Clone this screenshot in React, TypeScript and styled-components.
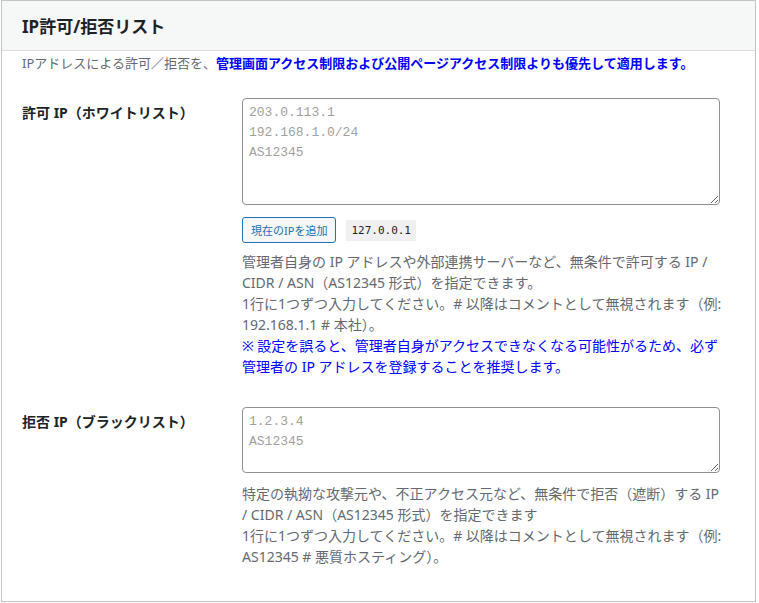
import styled, { createGlobalStyle } from "styled-components";

const GlobalStyle = createGlobalStyle`
  html, body {
    margin: 0;
    padding: 0;
    background: #ffffff;
  }
  body {
    font-family: "Noto Sans", "Noto Sans CJK JP", sans-serif;
    color: #1d2327;
  }
`;

const Panel = styled.section`
  box-sizing: border-box;
  width: 755px;
  height: 602px;
  margin-left: 1px;
  border: 1px solid #c3c4c7;
  background: #ffffff;
`;

const PanelHeader = styled.header`
  height: 49px;
  display: flex;
  align-items: center;
  padding: 0 20px;
  background: #f6f7f7;
  border-bottom: 1px solid #dcdcde;
`;

const Title = styled.h2`
  margin: 0;
  font-size: 17px;
  font-weight: 700;
  color: #1d2327;
`;

const PanelBody = styled.div`
  padding: 0 20px;
`;

const Intro = styled.p`
  margin: 0;
  padding: 3px 0 11px;
  font-size: 13px;
  line-height: 18px;
  color: #646970;
`;

const Notice = styled.strong`
  color: #0000ff;
  font-weight: 600;
`;

const FieldRow = styled.div`
  display: grid;
  grid-template-columns: 220px 483px;
  padding: 15px 0;
`;

const FieldLabel = styled.label`
  padding-top: 5px;
  font-size: 14px;
  line-height: 20px;
  font-weight: 700;
  color: #1d2327;
`;

const FieldControl = styled.div`
  display: flex;
  flex-direction: column;
`;

const ListInput = styled.textarea<{ $height: number }>`
  display: block;
  box-sizing: border-box;
  width: 478px;
  height: ${(p) => p.$height}px;
  margin: 0;
  padding: 4px 6px;
  border: 1px solid #8c8f94;
  border-radius: 4px;
  font-family: "Liberation Mono", "DejaVu Sans Mono", monospace;
  font-size: 13px;
  line-height: 20px;
  color: #2c3338;
  background: #ffffff;
  resize: vertical;

  &::placeholder {
    color: #a0a0a0;
  }
`;

const ActionBar = styled.div`
  display: flex;
  align-items: center;
  gap: 10px;
  margin-top: 12px;
`;

const SmallButton = styled.button`
  box-sizing: border-box;
  height: 26px;
  padding: 0 8px;
  border: 1px solid #2271b1;
  border-radius: 3px;
  background: #f6f7f7;
  color: #2271b1;
  font-family: "Noto Sans", "Noto Sans CJK JP", sans-serif;
  font-size: 11px;
  cursor: pointer;
`;

const Code = styled.code`
  padding: 3px 5px;
  background: #f0f0f1;
  font-family: "DejaVu Sans Mono", monospace;
  font-size: 11px;
  line-height: 15px;
  color: #1d2327;
`;

const Note = styled.p<{ $gap: number }>`
  margin: ${(p) => p.$gap}px 0 0;
  font-size: 14px;
  line-height: 21px;
  color: #646970;
`;

const Warning = styled.span`
  color: #0000ff;
`;

export default function App() {
  return (
    <>
      <GlobalStyle />
      <Panel>
        <PanelHeader>
          <Title>IP許可/拒否リスト</Title>
        </PanelHeader>
        <PanelBody>
          <Intro>
            IPアドレスによる許可／拒否を、
            <Notice>管理画面アクセス制限および公開ページアクセス制限よりも優先して適用します。</Notice>
          </Intro>

          <FieldRow>
            <FieldLabel htmlFor="ip-allow">許可 IP（ホワイトリスト）</FieldLabel>
            <FieldControl>
              <ListInput
                id="ip-allow"
                $height={107}
                placeholder={"203.0.113.1\n192.168.1.0/24\nAS12345"}
              />
              <ActionBar>
                <SmallButton type="button">現在のIPを追加</SmallButton>
                <Code>127.0.0.1</Code>
              </ActionBar>
              <Note $gap={8}>
                管理者自身の IP アドレスや外部連携サーバーなど、無条件で許可する IP / CIDR / ASN（AS12345 形式）を指定できます。
                <br />
                1行に1つずつ入力してください。# 以降はコメントとして無視されます（例: 192.168.1.1 # 本社）。
                <br />
                <Warning>
                  ※ 設定を誤ると、管理者自身がアクセスできなくなる可能性がるため、必ず管理者の IP アドレスを登録することを推奨します。
                </Warning>
              </Note>
            </FieldControl>
          </FieldRow>

          <FieldRow>
            <FieldLabel htmlFor="ip-deny">拒否 IP（ブラックリスト）</FieldLabel>
            <FieldControl>
              <ListInput id="ip-deny" $height={66} placeholder={"1.2.3.4\nAS12345"} />
              <Note $gap={10}>
                特定の執拗な攻撃元や、不正アクセス元など、無条件で拒否（遮断）する IP / CIDR / ASN（AS12345 形式）を指定できます
                <br />
                1行に1つずつ入力してください。# 以降はコメントとして無視されます（例: AS12345 # 悪質ホスティング）。
              </Note>
            </FieldControl>
          </FieldRow>
        </PanelBody>
      </Panel>
    </>
  );
}
